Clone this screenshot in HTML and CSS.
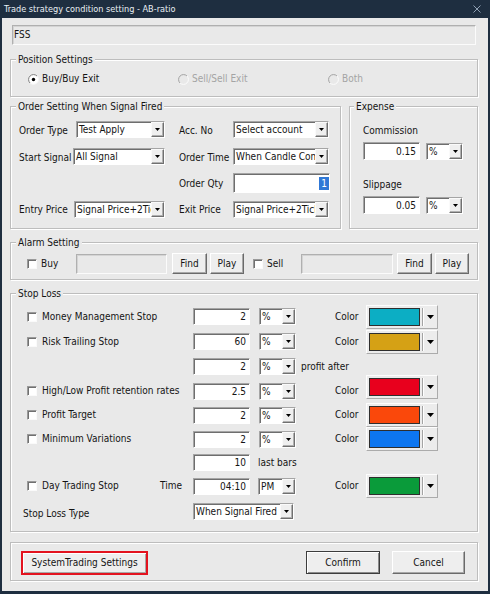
FILE: index.html
```html
<!DOCTYPE html>
<html lang="en">
<head>
<meta charset="utf-8">
<title>Trade strategy condition setting - AB-ratio</title>
<link rel="stylesheet" href="styles.css">
</head>
<body>
<div class="window">
  <div class="titlebar">
    <span class="title">Trade strategy condition setting - AB-ratio</span>
    <svg class="close" width="8" height="8" viewBox="0 0 8 8"><path d="M0.5 0.5L7.5 7.5M7.5 0.5L0.5 7.5" stroke="#8fa0b4" stroke-width="1"/></svg>
  </div>
  <div class="client">
    <div class="field fss">FSS</div>

    <fieldset class="group pos">
      <legend>Position Settings</legend>
      <div class="radios">
        <div class="radio"><svg width="11" height="11" viewBox="0 0 11 11"><circle cx="5.5" cy="5.5" r="5" fill="#fff"/><path d="M2 9A4.95 4.95 0 0 1 9 2" fill="none" stroke="#7d7d7d"/><path d="M9 2A4.95 4.95 0 0 1 2 9" fill="none" stroke="#f4f4f4"/><circle cx="5.5" cy="5.5" r="1.7" fill="#000"/></svg>Buy/Buy Exit</div>
        <div class="radio disabled"><svg width="11" height="11" viewBox="0 0 11 11"><circle cx="5.5" cy="5.5" r="5" fill="#e9e9e9"/><path d="M2 9A4.95 4.95 0 0 1 9 2" fill="none" stroke="#a2a2a2"/><path d="M9 2A4.95 4.95 0 0 1 2 9" fill="none" stroke="#fbfbfb"/></svg>Sell/Sell Exit</div>
        <div class="radio disabled"><svg width="11" height="11" viewBox="0 0 11 11"><circle cx="5.5" cy="5.5" r="5" fill="#e9e9e9"/><path d="M2 9A4.95 4.95 0 0 1 9 2" fill="none" stroke="#a2a2a2"/><path d="M9 2A4.95 4.95 0 0 1 2 9" fill="none" stroke="#fbfbfb"/></svg>Both</div>
      </div>
    </fieldset>

    <div class="mid">
      <fieldset class="group order">
        <legend>Order Setting When Signal Fired</legend>
        <div class="ogrid">
          <span class="lbl">Order Type</span>
          <div class="combo w89"><span class="cv">Test Apply</span><span class="dd"><svg width="5" height="3" viewBox="0 0 5 3"><path d="M0 0H5L2.5 3Z"/></svg></span></div>
          <span class="lbl c4">Acc. No</span>
          <div class="combo w96"><span class="cv">Select account</span><span class="dd"><svg width="5" height="3" viewBox="0 0 5 3"><path d="M0 0H5L2.5 3Z"/></svg></span></div>

          <span class="lbl">Start Signal</span>
          <div class="combo w92"><span class="cv">All Signal</span><span class="dd"><svg width="5" height="3" viewBox="0 0 5 3"><path d="M0 0H5L2.5 3Z"/></svg></span></div>
          <span class="lbl c4">Order Time</span>
          <div class="combo w96"><span class="cv">When Candle Complete</span><span class="dd"><svg width="5" height="3" viewBox="0 0 5 3"><path d="M0 0H5L2.5 3Z"/></svg></span></div>

          <span class="lbl c4">Order Qty</span>
          <div class="tb qty"><span class="sel">1</span></div>

          <span class="lbl">Entry Price</span>
          <div class="combo w91"><span class="cv">Signal Price+2Tick</span><span class="dd"><svg width="5" height="3" viewBox="0 0 5 3"><path d="M0 0H5L2.5 3Z"/></svg></span></div>
          <span class="lbl c4">Exit Price</span>
          <div class="combo w96"><span class="cv">Signal Price+2Tick</span><span class="dd"><svg width="5" height="3" viewBox="0 0 5 3"><path d="M0 0H5L2.5 3Z"/></svg></span></div>
        </div>
      </fieldset>

      <fieldset class="group expense">
        <legend>Expense</legend>
        <div class="exin">
          <div class="exl">Commission</div>
          <div class="exrow">
            <div class="tb num exn">0.15</div>
            <div class="combo w37"><span class="cv">%</span><span class="dd"><svg width="5" height="3" viewBox="0 0 5 3"><path d="M0 0H5L2.5 3Z"/></svg></span></div>
          </div>
          <div class="exl ex2">Slippage</div>
          <div class="exrow">
            <div class="tb num exn">0.05</div>
            <div class="combo w37"><span class="cv">%</span><span class="dd"><svg width="5" height="3" viewBox="0 0 5 3"><path d="M0 0H5L2.5 3Z"/></svg></span></div>
          </div>
        </div>
      </fieldset>
    </div>

    <fieldset class="group alarm">
      <legend>Alarm Setting</legend>
      <div class="arow">
        <div class="ck w49"><span class="cb"></span>Buy</div>
        <div class="field atb w91b"></div>
        <div class="btn find">Find</div>
        <div class="btn play">Play</div>
        <div class="ck w48 sellck"><span class="cb"></span>Sell</div>
        <div class="field atb w92b"></div>
        <div class="btn find f2">Find</div>
        <div class="btn play">Play</div>
      </div>
    </fieldset>

    <fieldset class="group stop">
      <legend>Stop Loss</legend>
      <div class="srows">
        <div class="sr h25">
          <div class="sl"><span class="cb"></span>Money Management Stop</div>
          <div class="tb num sn">2</div>
          <div class="combo w37 sc"><span class="cv">%</span><span class="dd"><svg width="5" height="3" viewBox="0 0 5 3"><path d="M0 0H5L2.5 3Z"/></svg></span></div>
          <span class="clr">Color</span>
          <div class="cbtn"><span class="sw c-cyan"></span><span class="sep"></span><svg width="7" height="4" viewBox="0 0 7 4"><path d="M0 0H7L3.5 4Z"/></svg></div>
        </div>
        <div class="sr h25">
          <div class="sl"><span class="cb"></span>Risk Trailing Stop</div>
          <div class="tb num sn">60</div>
          <div class="combo w37 sc"><span class="cv">%</span><span class="dd"><svg width="5" height="3" viewBox="0 0 5 3"><path d="M0 0H5L2.5 3Z"/></svg></span></div>
          <span class="clr">Color</span>
          <div class="cbtn"><span class="sw c-gold"></span><span class="sep"></span><svg width="7" height="4" viewBox="0 0 7 4"><path d="M0 0H7L3.5 4Z"/></svg></div>
        </div>
        <div class="sr h25">
          <div class="sl"></div>
          <div class="tb num sn">2</div>
          <div class="combo w37 sc"><span class="cv">%</span><span class="dd"><svg width="5" height="3" viewBox="0 0 5 3"><path d="M0 0H5L2.5 3Z"/></svg></span></div>
          <span class="after">profit after</span>
        </div>
        <div class="sr h24">
          <div class="sl"><span class="cb"></span>High/Low Profit retention rates</div>
          <div class="tb num sn">2.5</div>
          <div class="combo w37 sc"><span class="cv">%</span><span class="dd"><svg width="5" height="3" viewBox="0 0 5 3"><path d="M0 0H5L2.5 3Z"/></svg></span></div>
          <span class="clr">Color</span>
          <div class="cbtn up"><span class="sw c-red"></span><span class="sep"></span><svg width="7" height="4" viewBox="0 0 7 4"><path d="M0 0H7L3.5 4Z"/></svg></div>
        </div>
        <div class="sr h24">
          <div class="sl"><span class="cb"></span>Profit Target</div>
          <div class="tb num sn">2</div>
          <div class="combo w37 sc"><span class="cv">%</span><span class="dd"><svg width="5" height="3" viewBox="0 0 5 3"><path d="M0 0H5L2.5 3Z"/></svg></span></div>
          <span class="clr">Color</span>
          <div class="cbtn"><span class="sw c-orange"></span><span class="sep"></span><svg width="7" height="4" viewBox="0 0 7 4"><path d="M0 0H7L3.5 4Z"/></svg></div>
        </div>
        <div class="sr h24">
          <div class="sl"><span class="cb"></span>Minimum Variations</div>
          <div class="tb num sn">2</div>
          <div class="combo w37 sc"><span class="cv">%</span><span class="dd"><svg width="5" height="3" viewBox="0 0 5 3"><path d="M0 0H5L2.5 3Z"/></svg></span></div>
          <span class="clr">Color</span>
          <div class="cbtn"><span class="sw c-blue"></span><span class="sep"></span><svg width="7" height="4" viewBox="0 0 7 4"><path d="M0 0H7L3.5 4Z"/></svg></div>
        </div>
        <div class="sr h23">
          <div class="sl"></div>
          <div class="tb num sn">10</div>
          <span class="bars">last bars</span>
        </div>
        <div class="sr h24">
          <div class="sl sl8"><span class="cb"></span>Day Trading Stop</div>
          <span class="time">Time</span>
          <div class="tb num sn">04:10</div>
          <div class="combo w38 sc8"><span class="cv">PM</span><span class="dd"><svg width="5" height="3" viewBox="0 0 5 3"><path d="M0 0H5L2.5 3Z"/></svg></span></div>
          <span class="clr">Color</span>
          <div class="cbtn"><span class="sw c-green"></span><span class="sep"></span><svg width="7" height="4" viewBox="0 0 7 4"><path d="M0 0H7L3.5 4Z"/></svg></div>
        </div>
        <div class="sr h26">
          <span class="slt">Stop Loss Type</span>
          <div class="combo w101"><span class="cv">When Signal Fired</span><span class="dd"><svg width="5" height="3" viewBox="0 0 5 3"><path d="M0 0H5L2.5 3Z"/></svg></span></div>
        </div>
      </div>
    </fieldset>

    <div class="group bottom">
      <div class="btn sys">SystemTrading Settings</div>
      <div class="btn def confirm">Confirm</div>
      <div class="btn cancel">Cancel</div>
    </div>
  </div>
</div>
</body>
</html>
```

FILE: styles.css
```css
* { box-sizing: border-box; }
html, body { margin: 0; padding: 0; }
body {
  width: 490px; height: 594px; overflow: hidden;
  background: #1e2e40;
  font-family: "DejaVu Sans Condensed", "Liberation Sans", sans-serif;
  font-size: 10px; line-height: 12px; color: #141414;
}
.window {
  width: 490px; height: 594px;
  display: flex; flex-direction: column;
  background: #1e2e40;
  padding: 0 2px 3px 2px;
}
.titlebar {
  height: 18px; flex: none;
  display: flex; align-items: center; justify-content: space-between;
  padding: 0 7px 0 2px;
  color: #e9eef4; font-size: 9.1px;
}
.client { flex: 1; background: #e9e9e9; padding: 7px 10px 0 8px; }

/* sunken disabled field */
.field {
  border: 1px solid; border-color: #b0b0b0 #fbfbfb #fbfbfb #b0b0b0;
  box-shadow: inset 1px 1px 0 #d4d4d4;
  background: #e9e9e9;
}
.fss { height: 20px; margin: 0 2px; padding-left: 1px; line-height: 18px; }

/* group boxes */
.group {
  margin: 0; padding: 0; min-width: 0;
  border: 1px solid #bdbdbd;
  box-shadow: inset 1px 1px 0 #fff, 1px 1px 0 #fff;
}
.group > legend {
  margin-left: 5px; padding: 0 2px;
  height: 13px; line-height: 13px;
  background: #e9e9e9;
}

/* position settings */
.pos { margin-top: 8px; }
.radios { display: grid; grid-template-columns: 150px 150px 1fr; padding: 6px 0 10px 17px; }
.radio { display: flex; align-items: center; height: 14px; }
.radio svg { flex: none; margin-right: 3px; }
.disabled { color: #a4a4a4; }

/* white sunken controls */
.tb, .combo {
  background: #fff;
  border: 1px solid; border-color: #a5a5a5 #fff #fff #a5a5a5;
  box-shadow: inset 1px 1px 0 #6e6e6e;
}
.num { text-align: right; padding: 1px 3px 0 1px; line-height: 14px; }
.combo { display: flex; height: 17px; padding: 1px 0 0 1px; }
.cv { flex: 1; min-width: 0; overflow: hidden; white-space: nowrap; padding-left: 1px; line-height: 14px; }
.dd {
  flex: none; width: 13px;
  display: flex; align-items: center; justify-content: center;
  background: #efefef;
  border: 1px solid; border-color: #fafafa #707070 #707070 #fafafa;
  box-shadow: inset -1px -1px 0 #b0b0b0;
  margin-top: -1px;
}
.dd svg { fill: #000; }
.w37 { width: 37px; }
.w38 { width: 38px; }
.w89 { width: 89px; }
.w91 { width: 91px; }
.w92 { width: 92px; }
.w96 { width: 96px; }
.w101 { width: 101px; }

/* order / expense */
.mid { display: flex; gap: 8px; margin-top: 3px; }
.order { width: 331px; flex: none; }
.expense { flex: 1; }
.expense > legend { margin-left: 4px; }
.ogrid {
  display: grid;
  grid-template-columns: 55px 91px 14px 54px 96px;
  grid-template-rows: 27px 27px 26px 26px;
  align-items: center;
  padding: 3px 0 6px 8px;
}
.ogrid .combo { justify-self: end; }
.lbl { padding-top: 2px; white-space: nowrap; }
.c4 { grid-column: 4; }
.qty { width: 97px; height: 20px; display: flex; justify-content: flex-end; align-items: center; }
.sel { background: #3078d6; color: #fff; line-height: 13px; padding: 0 2px; }

.exin { padding: 12px 0 0 13px; }
.exl { height: 12px; }
.ex2 { margin-top: 19px; }
.exrow { display: flex; align-items: center; gap: 6px; margin-top: 5px; }
.exn { width: 57px; height: 18px; padding-top: 2px; }

/* alarm */
.alarm { margin-top: 7px; }
.arow { display: flex; align-items: center; height: 21px; margin: 4px 0 5px 16px; }
.ck { display: flex; align-items: center; }
.cb {
  flex: none; width: 10px; height: 10px;
  background: #fff;
  border: 1px solid; border-color: #9a9a9a #fafafa #fafafa #9a9a9a;
  box-shadow: inset 1px 1px 0 #707070;
}
.ck .cb { margin-right: 4px; }
.w49 { width: 49px; }
.w48 { width: 48px; }
.sellck { margin-left: 9px; }
.atb { height: 20px; }
.w91b { width: 91px; }
.w92b { width: 92px; }
.btn {
  display: flex; align-items: center; justify-content: center;
  background: #eeeeee;
  border: 1px solid; border-color: #fff #6a6a6a #6a6a6a #fff;
  box-shadow: inset -1px -1px 0 #a8a8a8;
  white-space: nowrap;
}
.find { width: 35px; height: 21px; margin-left: 5px; }
.f2 { margin-left: 4px; }
.play { width: 34px; height: 21px; margin-left: 3px; }

/* stop loss */
.stop { margin-top: 7px; }
.srows { padding: 4px 0 7px 16px; }
.sr { display: flex; align-items: center; }
.h23 { height: 23px; }
.h24 { height: 24px; }
.h25 { height: 25px; }
.h26 { height: 26px; }
.sl { flex: none; width: 166px; display: flex; align-items: center; white-space: nowrap; }
.sl .cb { margin-right: 5px; }
.sl8 { width: 133px; }
.time { width: 33px; }
.sn { width: 57px; height: 17px; }
.sc { margin-left: 9px; }
.sc8 { margin-left: 8px; }
.clr { margin-left: 39px; width: 31px; }
.after { margin-left: 5px; }
.bars { margin-left: 8px; }
.slt { width: 170px; margin-left: -4px; padding-top: 6px; }
.cbtn {
  width: 72px; height: 24px;
  display: flex; align-items: center;
  padding-left: 2px;
  background: #ececec;
  border: 1px solid; border-color: #fdfdfd #ababab #ababab #fdfdfd;
}
.cbtn svg { fill: #000; margin-left: 3px; }
.up { margin-bottom: 8px; }
.sw { width: 51px; height: 18px; border: 1px solid #2e2e2e; }
.sep { width: 2px; height: 18px; margin-left: 2px; border-left: 1px solid #a4a4a4; border-right: 1px solid #fff; }
.c-cyan { background: #0caec4; }
.c-gold { background: #d5a115; }
.c-red { background: #e8001d; }
.c-orange { background: #fa480b; }
.c-blue { background: #0d76f0; }
.c-green { background: #0a9b3a; }

/* bottom buttons */
.bottom { margin-top: 10px; height: 39px; display: flex; align-items: flex-start; padding: 8px 12px 0 10px; }
.sys {
  width: 127px; height: 24px;
  border: 2px solid #e3131f;
  box-shadow: inset 1px 1px 0 #fff, inset -1px -1px 0 #a8a8a8;
}
.confirm { width: 74px; height: 23px; margin-left: auto; }
.def { border-color: #3c3c3c; box-shadow: inset 1px 1px 0 #fff, inset -1px -1px 0 #8a8a8a; }
.cancel { width: 73px; height: 23px; margin-left: 12px; }
```
